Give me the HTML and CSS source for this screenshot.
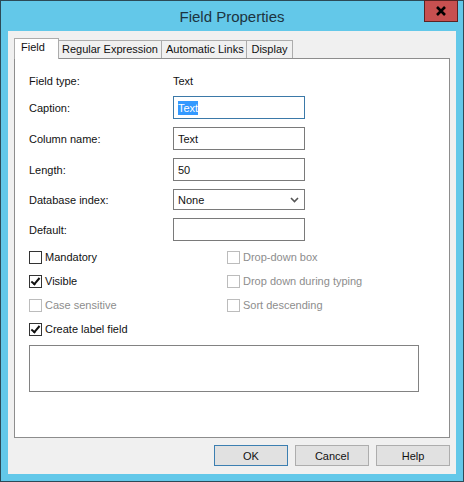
FILE: index.html
```html
<!DOCTYPE html>
<html lang="en">
<head>
  <meta charset="UTF-8">
  <title>Field Properties</title>
  <link rel="stylesheet" href="styles.css">
</head>
<body>
  <div class="window">
    <div class="titlebar">
      <span class="title">Field Properties</span>
      <button class="close" aria-label="Close">
        <svg width="12" height="10" viewBox="0 0 12 10"><path d="M2 1 L10 9 M10 1 L2 9" stroke="#000" stroke-width="2.6"/></svg>
      </button>
    </div>

    <div class="client">
      <!-- Tabs -->
      <div class="tabs">
        <div class="tab active">Field</div>
        <div class="tab tab-regex">Regular Expression</div>
        <div class="tab tab-links">Automatic Links</div>
        <div class="tab tab-display">Display</div>
      </div>

      <div class="panel">
        <div class="form">
          <span class="label">Field type:</span>
          <span class="value">Text</span>

          <label class="label" for="caption">Caption:</label>
          <div class="input focus"><span class="selected">Text</span></div>

          <label class="label" for="colname">Column name:</label>
          <div class="input">Text</div>

          <label class="label" for="length">Length:</label>
          <div class="input">50</div>

          <label class="label" for="dbindex">Database index:</label>
          <div class="input select">
            <span>None</span>
            <svg width="9" height="6" viewBox="0 0 9 6"><path d="M1 1 L4.5 4.5 L8 1" stroke="#555" stroke-width="1.6" fill="none"/></svg>
          </div>

          <label class="label" for="default">Default:</label>
          <div class="input"></div>
        </div>

        <!-- Options -->
        <div class="checks">
          <div class="check"><span class="box"></span>Mandatory</div>
          <div class="check disabled"><span class="box"></span>Drop-down box</div>
          <div class="check"><span class="box checked"></span>Visible</div>
          <div class="check disabled"><span class="box"></span>Drop down during typing</div>
          <div class="check disabled"><span class="box"></span>Case sensitive</div>
          <div class="check disabled"><span class="box"></span>Sort descending</div>
          <div class="check"><span class="box checked"></span>Create label field</div>
        </div>

        <div class="textarea"></div>
      </div>

      <div class="buttons">
        <button class="btn default">OK</button>
        <button class="btn">Cancel</button>
        <button class="btn">Help</button>
      </div>
    </div>
  </div>
</body>
</html>
```

FILE: styles.css
```css
* {
  box-sizing: border-box;
}

body {
  margin: 0;
  font-family: "Liberation Sans", Arial, sans-serif;
  font-size: 11px;
  color: #111;
}

.window {
  position: relative;
  width: 464px;
  height: 482px;
  border: 1px solid #2c4a57;
  background: #63c8e9;
  padding: 0 7px 7px 7px;
  display: flex;
  flex-direction: column;
}

.titlebar {
  height: 30px;
  display: flex;
  align-items: center;
  justify-content: center;
}

.title {
  font-size: 15px;
  color: #1d3440;
  margin-top: 1px;
}

.close {
  position: absolute;
  top: -1px;
  right: 5px;
  width: 34px;
  height: 22px;
  background: #c75050;
  border: 1px solid #5a2323;
  padding: 0;
  display: flex;
  align-items: center;
  justify-content: center;
}

.client {
  flex: 1;
  background: #f0f0f0;
  padding: 7px 6px 8px 6px;
  display: flex;
  flex-direction: column;
}

.tabs {
  display: flex;
  align-items: flex-end;
  height: 20px;
  position: relative;
  z-index: 1;
}

.tab {
  height: 18px;
  padding: 0 4px;
  border: 1px solid #acacac;
  border-left: none;
  border-bottom: none;
  background: #f0f0f0;
  line-height: 17px;
  white-space: nowrap;
  text-align: center;
}

.tab.active {
  width: 45px;
  height: 21px;
  margin-bottom: -1px;
  border-left: 1px solid #acacac;
  background: #fff;
  line-height: 17px;
  text-align: left;
  padding-left: 6px;
}

.tab-regex { width: 103px; padding: 0 2px; }
.tab-links { width: 85px; }
.tab-display { width: 46px; }

.panel {
  height: 380px;
  background: #fff;
  border: 1px solid #8d8d8d;
  padding: 15px 14px 0 14px;
}

.form {
  display: grid;
  grid-template-columns: 144px 132px;
  grid-template-rows: 14px 23px 23px 23px 21px 23px;
  row-gap: 8px;
  align-items: center;
}

.form .value {
  line-height: 14px;
}

.input {
  height: 23px;
  border: 1px solid #7a7a7a;
  padding: 0 4px;
  display: flex;
  align-items: center;
}

.input.focus {
  border-color: #3b79a8;
}

.selected {
  background: #3399ff;
  color: #fff;
  line-height: 14px;
}

.input.select {
  height: 21px;
  justify-content: space-between;
  padding: 0 5px 0 4px;
}

.checks {
  display: grid;
  grid-template-columns: 198px 1fr;
  grid-auto-rows: 16px;
  row-gap: 8px;
  margin-top: 8px;
}

.check {
  display: flex;
  align-items: center;
  gap: 3px;
  white-space: nowrap;
}

.check.disabled {
  color: #8d8d8d;
}

.box {
  width: 13px;
  height: 13px;
  border: 1px solid #333;
  background: #fff;
  position: relative;
}

.check.disabled .box {
  border-color: #bcbcbc;
}

.box.checked::after {
  content: "";
  position: absolute;
  left: 3px;
  top: 0px;
  width: 3px;
  height: 7px;
  border: solid #111;
  border-width: 0 2px 2px 0;
  transform: rotate(40deg);
}

.textarea {
  width: 390px;
  height: 47px;
  margin-top: 8px;
  border: 1px solid #828282;
}

.buttons {
  display: flex;
  justify-content: flex-end;
  gap: 7px;
  margin-top: 7px;
}

.btn {
  width: 74px;
  height: 21px;
  background: #e1e1e1;
  border: 1px solid #adadad;
  font-family: "Liberation Sans", Arial, sans-serif;
  font-size: 11px;
  color: #111;
  padding: 0;
}

.btn.default {
  border-color: #3c7fb1;
}
```
